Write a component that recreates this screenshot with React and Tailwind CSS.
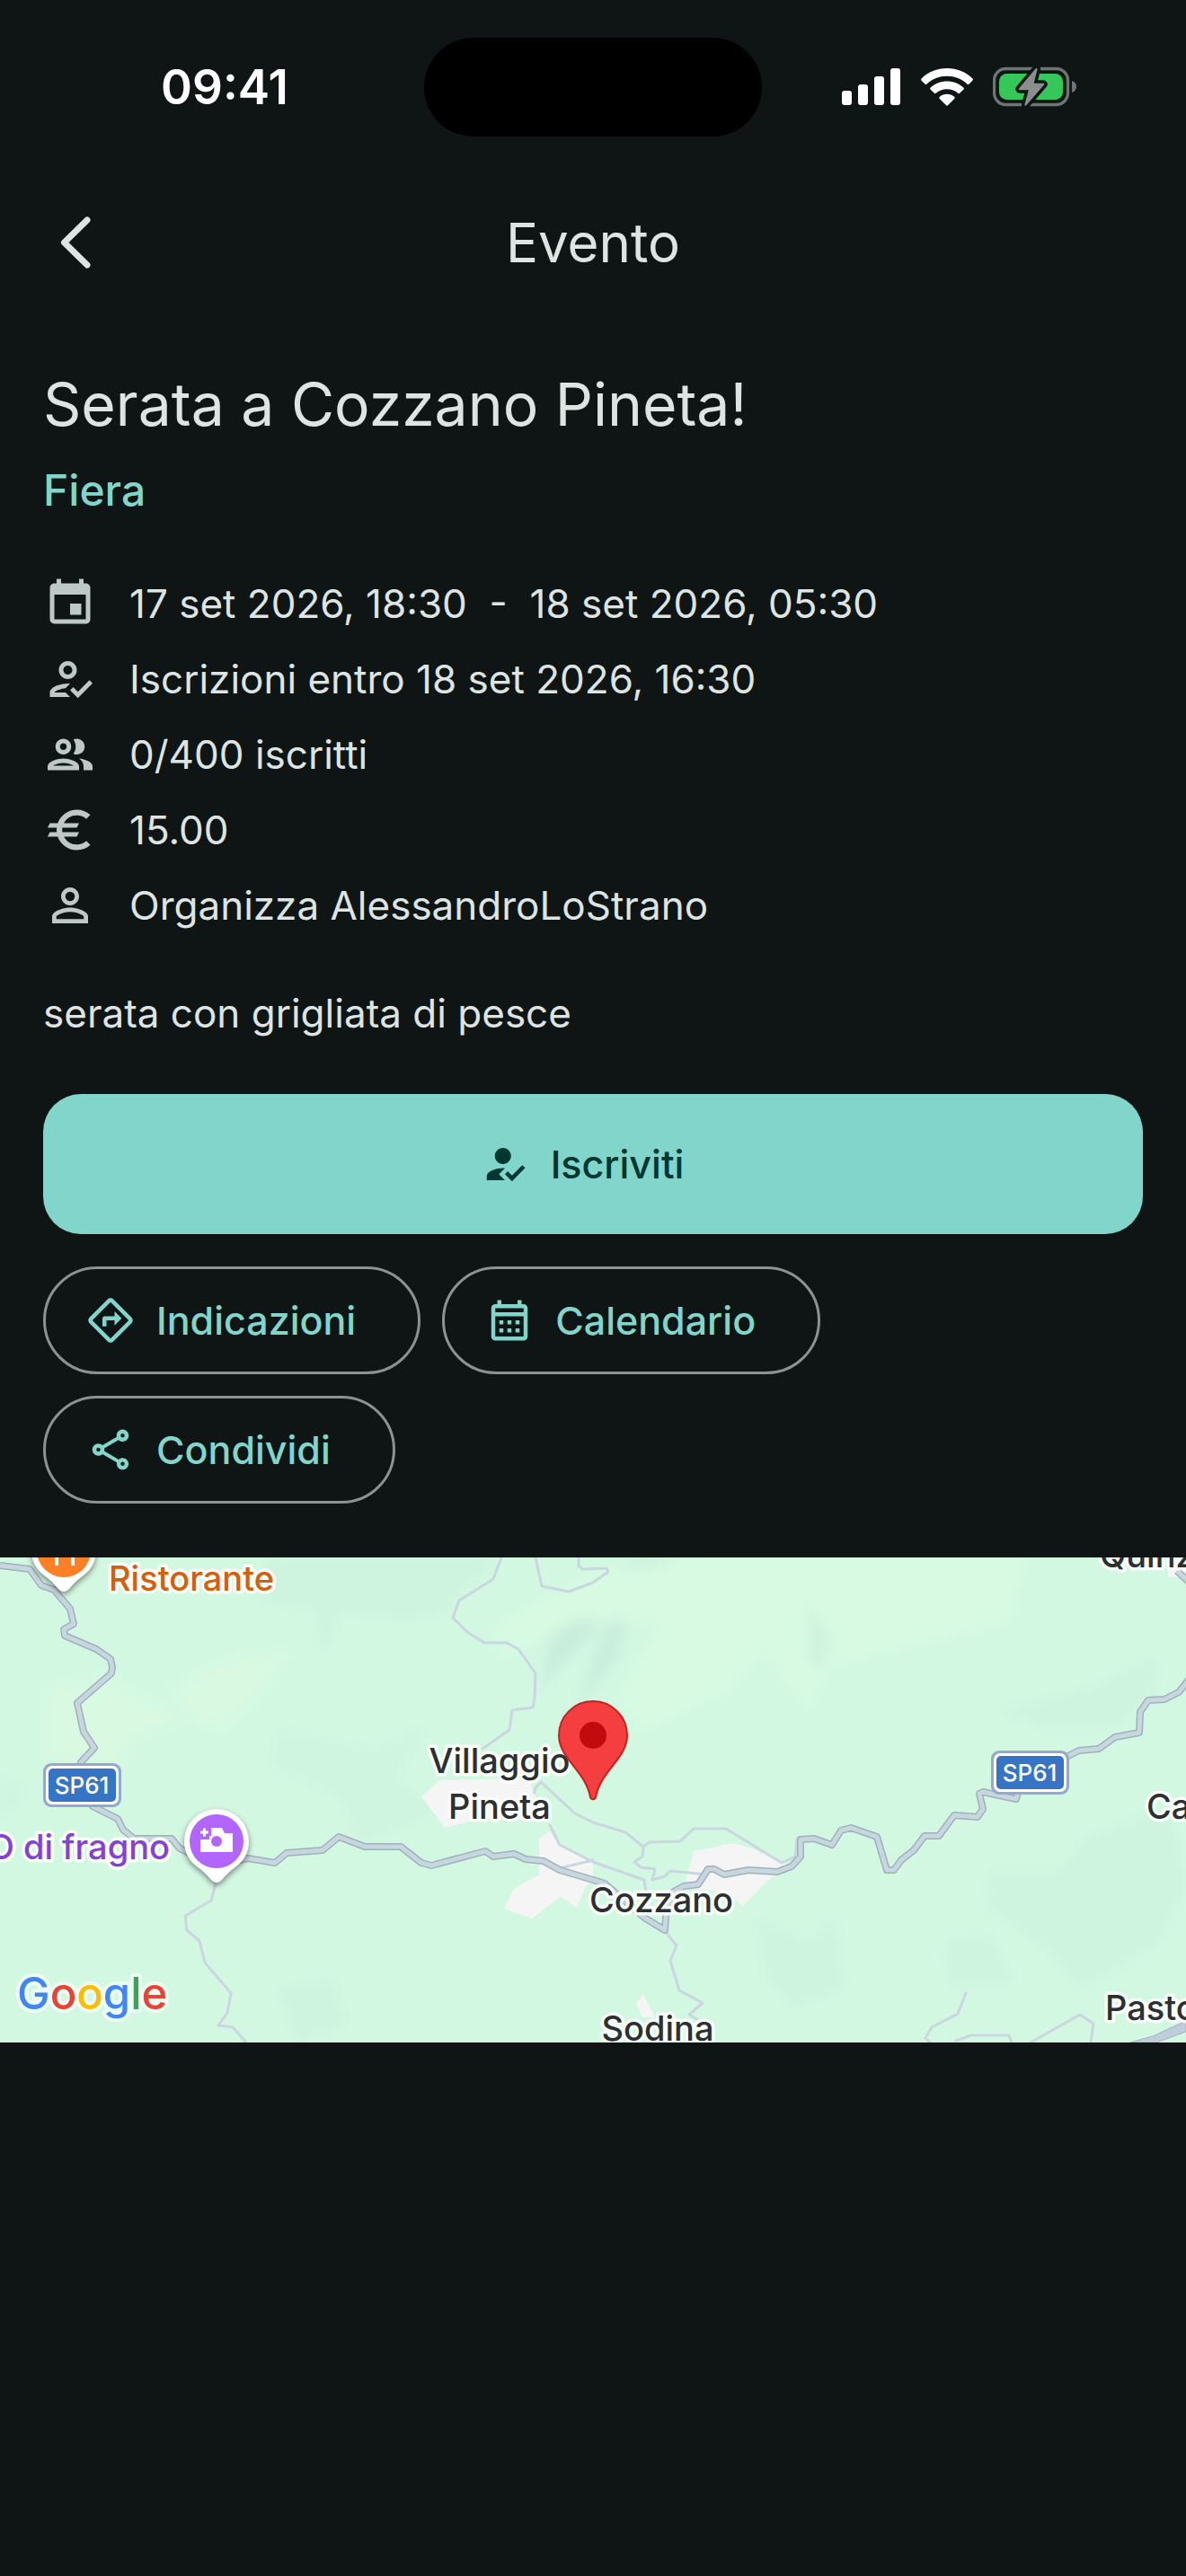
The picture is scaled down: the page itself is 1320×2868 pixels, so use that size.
// src/pages/EventPage.jsx
import {
  MdEvent,
  MdEuro,
  MdHowToReg,
  MdOutlineCalendarMonth,
  MdOutlineDirections,
  MdOutlineGroup,
  MdOutlineHowToReg,
  MdOutlineShare,
  MdPersonOutline,
} from 'react-icons/md';

const event = {
  title: 'Serata a Cozzano Pineta!',
  type: 'Fiera',
  description: 'serata con grigliata di pesce',
  details: [
    { icon: MdEvent, text: '17 set 2026, 18:30  -  18 set 2026, 05:30' },
    { icon: MdOutlineHowToReg, text: 'Iscrizioni entro 18 set 2026, 16:30' },
    { icon: MdOutlineGroup, text: '0/400 iscritti' },
    { icon: MdEuro, text: '15.00' },
    { icon: MdPersonOutline, text: 'Organizza AlessandroLoStrano' },
  ],
};

const actions = [
  { icon: MdOutlineDirections, label: 'Indicazioni' },
  { icon: MdOutlineCalendarMonth, label: 'Calendario' },
  { icon: MdOutlineShare, label: 'Condividi' },
];

const StatusBar = () => (
  <div className="grid grid-cols-[1fr_376px_1fr] items-center pt-[42px] text-white">
    <div className="pl-7 text-center text-[53px] leading-[60px] font-semibold">09:41</div>
    <div className="h-[110px] rounded-full bg-black" />
    <div className="flex items-center justify-center gap-[22px] pr-8">
      <svg className="h-[42px] w-[66px]" viewBox="0 0 66 42" fill="currentColor" aria-hidden="true">
        <rect x="0" y="25" width="11" height="16" rx="3" />
        <rect x="18" y="18" width="11" height="23" rx="3" />
        <rect x="36" y="9" width="11" height="32" rx="3" />
        <rect x="54" y="0" width="11" height="41" rx="3" />
      </svg>
      <svg className="h-[42px] w-[58px]" viewBox="0 0 58 42" fill="currentColor" aria-hidden="true">
        <path d="M29 0c11 0 21 4 28.400 11.500c.7.700.7 1.500 0 2.200l-3.800 3.800c-.7.700-1.500.7-2.200 0C45.500 12 37.500 8.800 29 8.800S12.500 12 6.600 17.500c-.7.700-1.500.7-2.200 0L.6 13.700c-.7-.7-.7-1.500 0-2.200C8 4 18 0 29 0z" />
        <path d="M29 14.500c7 0 13.400 2.600 18.300 7c.7.700.7 1.500 0 2.200l-4 3.900c-.7.700-1.400.7-2.100.1C38 24.900 33.700 23.200 29 23.200s-9 1.700-12.200 4.500c-.7.600-1.400.6-2.100-.1l-4-3.900c-.7-.7-.7-1.500 0-2.200C15.600 17.100 22 14.500 29 14.500z" />
        <path d="M29 28.800c3.200 0 6 1.100 8.200 3c.7.600.7 1.400 0 2.100l-7.100 7.200c-.7.700-1.500.7-2.200 0l-7.100-7.200c-.7-.7-.7-1.500 0-2.100c2.200-1.900 5-3 8.200-3z" />
      </svg>
      <svg className="h-[46px] w-[94px]" viewBox="0 0 94 46" aria-hidden="true">
        <rect x="1.500" y="2.500" width="82" height="40" rx="13" fill="none" stroke="#6e7373" strokeWidth="3.400" />
        <rect x="7" y="8" width="71" height="29" rx="8.500" fill="#34c759" />
        <path d="M88 16c3.500 1.200 5 3.500 5 6.500s-1.500 5.300-5 6.500z" fill="#6e7373" />
        <path
          d="M47.500 2.500L29 24.500c-.6.800-.2 1.700.8 1.700h10L35.500 42c-.4 1.500 1 2.200 2 1L57 20.500c.7-.8.300-1.700-.8-1.700H45.700L49.500 3.500c.4-1.500-1-2.100-2-1z"
          fill="#8a8f8e"
          stroke="#0e1514"
          strokeWidth="7"
          paintOrder="stroke"
          strokeLinejoin="round"
        />
      </svg>
    </div>
  </div>
);

const TopBar = () => (
  <header className="grid grid-cols-[1fr_auto_1fr] items-center px-12 pt-[58px] pb-[72px]">
    <button type="button" className="h-[120px] w-[72px]" aria-label="Indietro">
      <svg className="h-[72px] w-[72px]" viewBox="0 0 72 72" fill="none" aria-hidden="true">
        <path d="M49 11L23.500 36L49 61" stroke="currentColor" strokeWidth="7" strokeLinecap="round" strokeLinejoin="round" />
      </svg>
    </button>
    <h1 className="text-[60px] leading-[84px]">Evento</h1>
  </header>
);

const roads =
  'M0 9L33 13L46 31L60 36L78 57L82 74L71 80L72 87L107 102L123 113L125 122L124 129L86 162L93 194L105 212L90 228L91 253L103 277L131 291L137 303L149 313L191 313L200 324L210 329L240 342L276 335L306 340L319 329L359 326L377 311L406 322L446 322L469 340L480 343L540 327L549 333L572 330L585 336L605 338L623 348L660 359L673 363L717 401L740 415L741 400L750 372L761 366L777 364L788 347L795 347L806 353L833 348L865 350L881 344L891 333L891 314L906 313L926 320L936 304L947 301L976 311L987 348L995 348L1003 337L1017 326L1029 310L1045 310L1062 287L1088 289L1094 280L1090 263L1094 261L1131 269L1133 262L1146 240L1189 221L1201 215L1223 213L1241 200L1268 195L1269 172L1278 159L1296 158L1312 150L1324 135M1310 15L1324 28';

const paths =
  'M558 0L549 24L511 48L504 67L520 83L539 95L564 95L577 102L596 129L595 157L593 167L570 170L567 192L537 213M596 0L603 32L633 38L660 28L677 16L675 12L648 13L644 9L644 0M240 363L235 382L206 399L208 415L222 427L228 451L257 485L253 507L243 521L259 523L274 540M595 262L596 256L602 250L640 285L660 295L696 306L716 322L715 333L706 339L713 345L729 347L726 359L740 355L746 349L786 353M716 322L723 317L757 316L772 302L808 302L870 340L885 333L887 314M612 298L623 320L660 339L717 359L719 372M623 346L660 337M740 416L753 432L746 449L756 482L782 496L767 509L779 516M1075 485L1066 508L1037 523L1030 535L1035 540M1064 538L1081 532L1123 532L1126 540M1147 540L1202 509L1217 519L1214 540';

const urban =
  'M490 248L469 266L495 301L530 292L610 290L593 261L589 246ZM600 313L612 305L623 320L660 340L660 361L652 366L642 390L624 377L592 402L561 391L572 369L600 353ZM772 327L816 318L837 324L875 342L851 363L827 388L807 372L761 368ZM708 496L716 486L729 512L715 512ZM1300 12H1320V22H1300Z';

const places = [
  { x: 556, y: 240, name: 'Villaggio', anchor: 'middle' },
  { x: 556, y: 291, name: 'Pineta', anchor: 'middle' },
  { x: 736, y: 395, name: 'Cozzano', anchor: 'middle' },
  { x: 732, y: 538, name: 'Sodina', anchor: 'middle' },
  { x: 1224, y: 11, name: 'Quinzano', anchor: 'start' },
  { x: 1276, y: 291, name: 'Casa', anchor: 'start' },
  { x: 1230, y: 515, name: 'Pastorello', anchor: 'start' },
];

const RoadShield = ({ x, y }) => (
  <g transform={`translate(${x} ${y})`}>
    <rect width="87" height="49" rx="9" fill="#93a9cf" />
    <rect x="3" y="3" width="81" height="43" rx="7" fill="#fff" />
    <rect x="6" y="6" width="75" height="37" rx="5" fill="#3674c6" />
    <text x="43" y="34" textAnchor="middle" fontSize="26" fontWeight="500" fill="#fff">
      SP61
    </text>
  </g>
);

const PoiPin = ({ x, y, color, children }) => (
  <g transform={`translate(${x} ${y})`}>
    <path
      className="drop-shadow-[0_3px_3px_rgba(0,0,0,0.45)]"
      d="M0 -36A36 36 0 0 1 36 0C36 13 30 22 22 28C15 33 10 38 6 43C2 47 -2 47 -6 43C-10 38 -15 33 -22 28C-30 22 -36 13 -36 0A36 36 0 0 1 0 -36Z"
      fill="#fff"
    />
    <circle r="30" fill={color} />
    {children}
  </g>
);

const EventMap = () => (
  <svg
    className="block h-[540px] w-full"
    viewBox="0 0 1320 540"
    preserveAspectRatio="xMidYMid slice"
    role="img"
    aria-label="Mappa"
  >
    <defs>
      <filter id="soft" x="-20%" y="-20%" width="140%" height="140%">
        <feGaussianBlur stdDeviation="7" />
      </filter>
    </defs>
    <rect width="1320" height="540" fill="#d3f8e2" />

    {/* terrain shading */}
    <g filter="url(#soft)">
      <path d="M300 0H560L520 30L500 60L450 70L380 60L360 110L350 60L300 50L280 40Z" fill="#cef3de" />
      <path d="M0 240L30 260L10 290L0 290ZM310 190L420 215L480 180L440 250L500 280L400 320L380 270L300 230Z" fill="#cff4df" />
      <path d="M600 150L660 85L700 30L750 0H710L650 50L610 90ZM640 170L690 110L700 60L670 80Z" fill="#c9eedb" />
      <path d="M1110 170L1200 150L1290 110L1280 160L1240 190L1160 190ZM1210 310L1300 280L1320 360L1290 430L1200 480L1170 440L1100 390L1100 350L1180 350Z" fill="#cef3de" />
      <path d="M840 400L900 430L930 400L940 480L880 500L850 460ZM1050 430L1100 420L1130 470L1060 480ZM310 480L370 470L385 520L330 540Z" fill="#cef3de" />
      <path d="M190 150L250 115L320 105L290 150L250 190L220 180ZM50 145L120 135L200 180L150 200L130 230L50 220Z" fill="#d9f9e1" />
      <path d="M550 80L660 20L780 0H1140L1120 70L1000 100L920 120L900 170L850 100L800 150L720 190L690 160L740 70L640 70L560 110Z" fill="#d8fae2" />
      <path d="M900 50L925 90L915 130L900 110Z" fill="#cef3de" />
    </g>

    <path d={urban} fill="#f4f5f4" />
    <path d={paths} fill="none" stroke="#cad6e0" strokeWidth="3" strokeLinejoin="round" strokeLinecap="round" />
    <path d={roads} fill="none" stroke="#9fb1bf" strokeWidth="8" strokeLinejoin="round" />
    <path d={roads} fill="none" stroke="#c8d6de" strokeWidth="5" strokeLinejoin="round" />
    <path d="M1258 540L1283 533L1320 516V528L1287 540Z" fill="#c1cdda" stroke="#9fb1bf" strokeWidth="1" />

    <RoadShield x={48} y={229} />
    <RoadShield x={1103} y={215} />

    <g fontSize="38" fontWeight="500" stroke="#fff" strokeWidth="7" strokeOpacity="0.85" strokeLinejoin="round" paintOrder="stroke">
      <text x="121" y="37" fill="#d55f0b">
        Ristorante
      </text>
      <text x="189" y="336" textAnchor="end" fill="#8541d3">
        O di fragno
      </text>
      {places.map((p) => (
        <text key={p.name} x={p.x} y={p.y} textAnchor={p.anchor} fill="#2c3030">
          {p.name}
        </text>
      ))}
    </g>

    <PoiPin x={71} y={-8} color="#ff7f24">
      <path d="M-8 0V17M10 0V17" stroke="#fff" strokeWidth="4" />
    </PoiPin>
    <PoiPin x={241} y={316} color="#b266ff">
      <path d="M-6 -15H6L9 -9H18V12H-18V-2H-8V-6H-6Z" fill="#fff" />
      <path d="M-18 -10H-9M-13.500 -14.500V-5.500" stroke="#fff" strokeWidth="3" />
      <circle cx="0" cy="0" r="6" fill="#b266ff" />
    </PoiPin>

    {/* event marker */}
    <path
      d="M660 160A38 38 0 0 1 698 198C698 224 668 238 663 267C662 270 658 270 657 267C652 238 622 224 622 198A38 38 0 0 1 660 160Z"
      fill="#f43e40"
      stroke="#c5221f"
      strokeWidth="2"
    />
    <circle cx="660" cy="198" r="15" fill="#c20b0f" />

    <text
      x="19"
      y="503"
      fontSize="49"
      fontWeight="500"
      stroke="#fff"
      strokeWidth="8"
      strokeOpacity="0.6"
      strokeLinejoin="round"
      paintOrder="stroke"
    >
      <tspan fill="#4285f4">G</tspan>
      <tspan fill="#ea4335">o</tspan>
      <tspan fill="#fbbc05">o</tspan>
      <tspan fill="#4285f4">g</tspan>
      <tspan fill="#34a853">l</tspan>
      <tspan fill="#ea4335">e</tspan>
    </text>
  </svg>
);

const App = () => {
  return (
    <div className="min-h-screen bg-[#0e1514] font-[Inter,sans-serif] text-[#dee4e2]">
      <StatusBar />
      <TopBar />

      <main>
        <section className="px-12">
          <h2 className="text-[66px] leading-[96px]">{event.title}</h2>
          <p className="mt-3 text-[48px] leading-[72px] font-medium text-[#82d5cb]">{event.type}</p>

          <ul className="mt-[60px] flex flex-col gap-6">
            {event.details.map(({ icon: Icon, text }) => (
              <li key={text} className="flex items-center gap-9">
                <Icon className="h-[60px] w-[60px] text-[#bec9c6]" />
                <span className="text-[44px] leading-[60px] whitespace-pre">{text}</span>
              </li>
            ))}
          </ul>

          <p className="mt-[60px] text-[44px] leading-[60px]">{event.description}</p>

          <button
            type="button"
            className="mt-[60px] flex h-[156px] w-full items-center justify-center gap-6 rounded-[42px] bg-[#82d5cb] pr-[72px] pl-12 text-[43px] font-medium text-[#003732]"
          >
            <MdHowToReg className="h-[54px] w-[54px]" />
            Iscriviti
          </button>

          <div className="mt-9 flex flex-wrap gap-6">
            {actions.map(({ icon: Icon, label }) => (
              <button
                key={label}
                type="button"
                className="flex h-[120px] items-center gap-6 rounded-full border-3 border-[#899391] pr-[69px] pl-[45px] text-[43px] font-medium text-[#82d5cb]"
              >
                <Icon className="h-[54px] w-[54px]" />
                {label}
              </button>
            ))}
          </div>
        </section>

        <section className="mt-[60px]">
          <EventMap />
        </section>
      </main>
    </div>
  );
};

export default App;
